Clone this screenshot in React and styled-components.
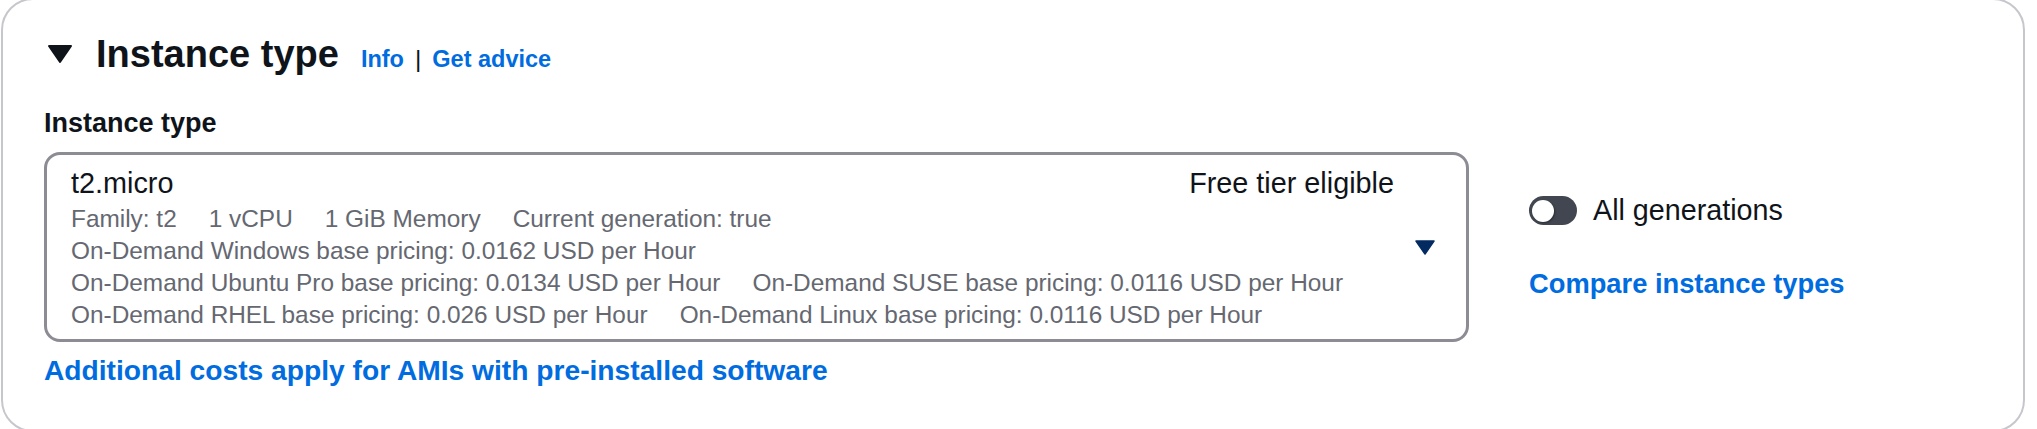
import styled, { createGlobalStyle } from 'styled-components';

const GlobalStyle = createGlobalStyle`
  html, body {
    margin: 0;
    padding: 0;
    background: #ffffff;
    overflow: hidden;
  }

  body {
    font-family: 'Liberation Sans', Arial, sans-serif;
    color: #0f141a;
  }
`;

const Card = styled.section`
  box-sizing: border-box;
  width: 2024px;
  height: 434px;
  margin: -2px 0 0 1px;
  padding: 30px 40px 0 41px;
  border: 2px solid #c6c6cd;
  border-radius: 32px;
  background: #ffffff;
`;

const Header = styled.div`
  display: flex;
  align-items: baseline;
  height: 48px;
`;

const CaretButton = styled.span`
  align-self: center;
  display: flex;
  width: 32px;
  height: 32px;
  margin-right: 20px;
  color: #0f141a;
`;

const Title = styled.h2`
  margin: 0;
  font-size: 38px;
  line-height: 48px;
  font-weight: 700;
  color: #0f141a;
`;

const InfoLinks = styled.span`
  display: flex;
  align-items: baseline;
  margin-left: 22px;
`;

const Link = styled.a`
  font-size: ${({ $size }) => $size || '27px'};
  font-weight: 700;
  color: #006ce0;
  text-decoration: none;
  cursor: pointer;
`;

const Separator = styled.span`
  margin: 0 11px;
  font-size: 24.5px;
  color: #0f141a;
`;

const FieldLabel = styled.label`
  display: block;
  margin-top: 27px;
  font-size: 27px;
  line-height: 36px;
  font-weight: 700;
  color: #0f141a;
`;

const FieldRow = styled.div`
  display: flex;
  align-items: center;
  gap: 60px;
  margin-top: 11px;
`;

const SelectTrigger = styled.div`
  box-sizing: border-box;
  display: flex;
  align-items: center;
  width: 1425px;
  padding: 8px 31px 8px 24px;
  border: 3px solid #8c8c94;
  border-radius: 16px;
  background: #ffffff;
`;

const OptionContent = styled.div`
  flex: 1;
  min-width: 0;
`;

const OptionHead = styled.div`
  display: flex;
  justify-content: space-between;
  font-size: 28.8px;
  line-height: 40px;
  color: #0f141a;
`;

const TagRow = styled.div`
  display: flex;
  gap: 32px;
  font-size: 24.4px;
  line-height: 32px;
  color: #656871;
  white-space: nowrap;
`;

const DropdownCaret = styled.svg`
  flex: none;
  width: 20px;
  height: 15px;
  margin-left: 21px;
  color: #032b62;
`;

const SideColumn = styled.div`
  display: flex;
  flex-direction: column;
  gap: 33px;
`;

const ToggleRow = styled.div`
  display: flex;
  align-items: center;
  height: 40px;
`;

const ToggleTrack = styled.span`
  box-sizing: border-box;
  display: flex;
  align-items: center;
  width: 48px;
  height: 29px;
  padding: 0 3px;
  border-radius: 15px;
  background: #424650;
`;

const ToggleKnob = styled.span`
  width: 22px;
  height: 22px;
  border-radius: 50%;
  background: #ffffff;
  box-shadow: 1px 1px 2px rgba(0, 0, 0, 0.35);
`;

const ToggleLabel = styled.span`
  margin-left: 16px;
  font-size: 28.7px;
  color: #0f141a;
`;

const CompareLink = styled(Link)`
  line-height: 40px;
`;

const Constraint = styled.div`
  margin-top: 12px;
  line-height: 32px;
`;

const tagRows = [
  ['Family: t2', '1 vCPU', '1 GiB Memory', 'Current generation: true'],
  ['On-Demand Windows base pricing: 0.0162 USD per Hour'],
  [
    'On-Demand Ubuntu Pro base pricing: 0.0134 USD per Hour',
    'On-Demand SUSE base pricing: 0.0116 USD per Hour',
  ],
  [
    'On-Demand RHEL base pricing: 0.026 USD per Hour',
    'On-Demand Linux base pricing: 0.0116 USD per Hour',
  ],
];

function App() {
  return (
    <>
      <GlobalStyle />
      <Card>
        <Header>
          <CaretButton>
            <svg width="32" height="32" viewBox="0 0 32 32">
              <polygon
                points="5,8 27,8 16,24"
                fill="currentColor"
                stroke="currentColor"
                strokeWidth="2"
                strokeLinejoin="round"
              />
            </svg>
          </CaretButton>
          <Title>Instance type</Title>
          <InfoLinks>
            <Link $size="23.5px">Info</Link>
            <Separator>|</Separator>
            <Link $size="23.5px">Get advice</Link>
          </InfoLinks>
        </Header>

        <FieldLabel>Instance type</FieldLabel>

        <FieldRow>
          <SelectTrigger>
            <OptionContent>
              <OptionHead>
                <span>t2.micro</span>
                <span>Free tier eligible</span>
              </OptionHead>
              {tagRows.map((row, i) => (
                <TagRow key={i}>
                  {row.map((tag) => (
                    <span key={tag}>{tag}</span>
                  ))}
                </TagRow>
              ))}
            </OptionContent>
            <DropdownCaret viewBox="0 0 20 15">
              <polygon
                points="1,1 19,1 10,14"
                fill="currentColor"
                stroke="currentColor"
                strokeWidth="1.5"
                strokeLinejoin="round"
              />
            </DropdownCaret>
          </SelectTrigger>

          <SideColumn>
            <ToggleRow>
              <ToggleTrack>
                <ToggleKnob />
              </ToggleTrack>
              <ToggleLabel>All generations</ToggleLabel>
            </ToggleRow>
            <CompareLink $size="27.3px">Compare instance types</CompareLink>
          </SideColumn>
        </FieldRow>

        <Constraint>
          <Link $size="28.2px">Additional costs apply for AMIs with pre-installed software</Link>
        </Constraint>
      </Card>
    </>
  );
}

export default App;
